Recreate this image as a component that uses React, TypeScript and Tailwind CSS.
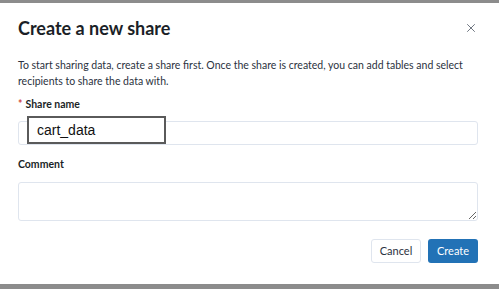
import { X } from "lucide-react";

export default function App() {
  return (
    <div className="h-[289px] w-[499px] bg-[#8c8c8c] pt-[3px] overflow-hidden">
      <div
        className="h-[281px] bg-white pl-[18px] pr-[21px] pt-[11px] text-[#1d2433]"
        style={{ fontFamily: 'Lato, "Noto Sans", sans-serif' }}
      >
        <div className="flex h-[28px] items-center justify-between">
          <h1 className="text-[18px] font-bold leading-[28px] text-[#1b1f27]">Create a new share</h1>
          <button className="text-[#5c6470]">
            <X size={14} strokeWidth={1.5} />
          </button>
        </div>

        <p className="mt-[15px] text-[10.5px] leading-[16px] text-[#2b3240]">
          To start sharing data, create a share first. Once the share is created, you can add tables and select
          recipients to share the data with.
        </p>

        <div className="mt-[7px]">
          <label className="flex items-center gap-[3px] text-[10.5px] font-bold leading-[16px] text-[#1b1f27]">
            <span className="text-[#d0413a]">*</span>
            Share name
          </label>
          <div className="relative mt-[9px]">
            <div className="h-[24px] w-full rounded-[3px] border border-[#dfe5ee] bg-white" />
            <div
              className="absolute left-[9px] top-[-5px] flex h-[28px] w-[139px] items-center border-2 border-[#5a5a5a] bg-white pl-[8px] text-[14px] text-[#111]"
              style={{ fontFamily: '"Liberation Sans", Arial, sans-serif' }}
            >
              cart_data
            </div>
          </div>
        </div>

        <div className="mt-[11px]">
          <label className="block text-[10.5px] font-bold leading-[16px] text-[#1b1f27]">Comment</label>
          <textarea className="mt-[10px] block h-[39px] w-full resize-y rounded-[3px] border border-[#dfe5ee] bg-white outline-none" />
        </div>

        <div className="mt-[18px] flex justify-end gap-[7px]">
          <button className="h-[24px] w-[50px] rounded-[3px] border border-[#dfe5ee] bg-white text-[11px] text-[#2b3240]">
            Cancel
          </button>
          <button className="h-[24px] w-[50px] rounded-[3px] bg-[#2272b6] text-[11px] text-white">
            Create
          </button>
        </div>
      </div>
    </div>
  );
}
